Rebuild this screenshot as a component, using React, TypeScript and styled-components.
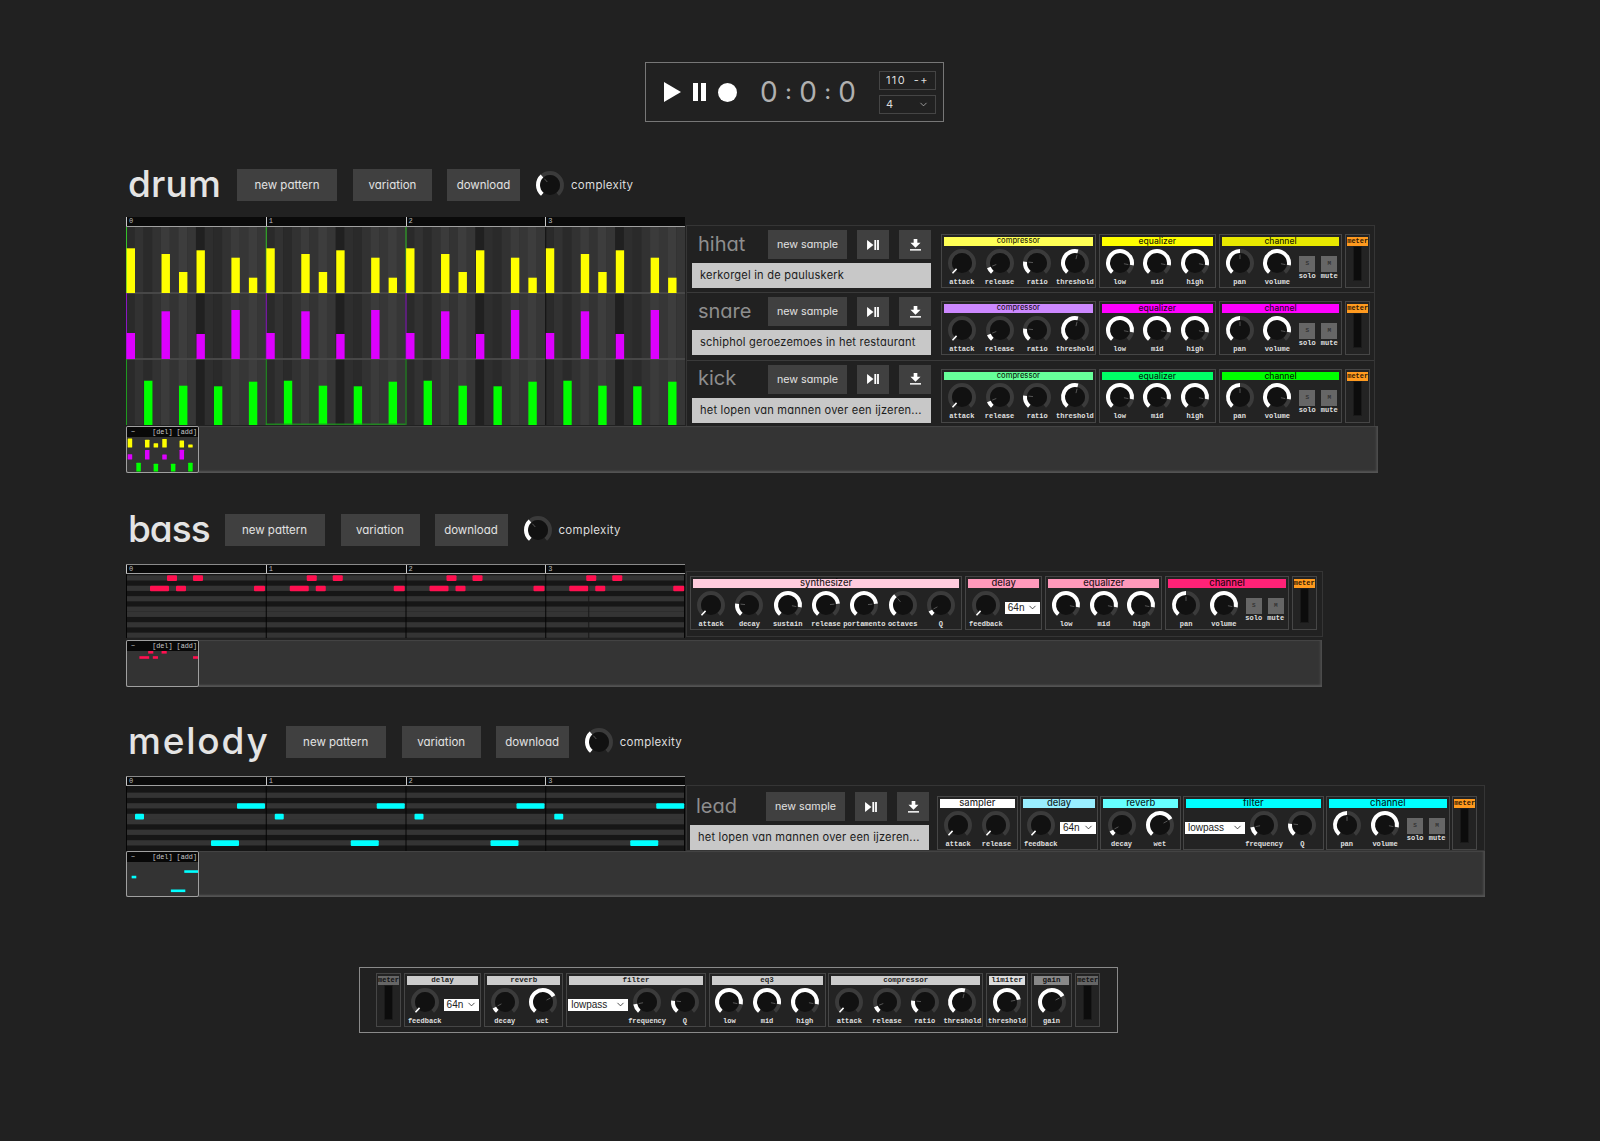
import React, { createContext, useContext } from "react";
import styled, { createGlobalStyle } from "styled-components";
import { ChevronDown } from "lucide-react";

const SANS = `"Inter", "Noto Sans", sans-serif`;
const MONO = `"Liberation Mono", "DejaVu Sans Mono", monospace`;

const HeadSize = createContext(8.5);
const KnobWidth = createContext(37.7);

const Global = createGlobalStyle`
  html, body { margin: 0; padding: 0; background: #212121; }
  * { box-sizing: border-box; }
  body { font-family: ${SANS}; font-feature-settings: "cv11" 1; color: #ddd; }
`;

const Page = styled.div`
  width: 1600px;
  height: 1141px;
  padding-top: 62px;
  overflow: hidden;
  background: #212121;
`;

/* transport */
const Transport = styled.div`
  margin-left: 645px;
  width: 299px;
  height: 60px;
  border: 1px solid #777;
  display: flex;
  align-items: center;
  padding-left: 18px;
`;
const TransportIcon = styled.svg<{ $ml?: number }>`
  display: block;
  flex: none;
  fill: #fff;
  margin-left: ${(p) => p.$ml ?? 0}px;
`;
const Clock = styled.div`
  display: flex;
  align-items: center;
  width: 96px;
  margin-left: 23px;
  justify-content: space-between;
  font-size: 28px;
  font-weight: 400;
  color: #b0b0b0;
  line-height: 1;
`;
const Colon = styled.span`
  font-size: 20px;
  font-weight: 600;
`;
const TempoColumn = styled.div`
  margin-left: auto;
  margin-right: 7px;
  display: flex;
  flex-direction: column;
  gap: 5px;
`;
const TempoBox = styled.div`
  width: 57px;
  height: 19px;
  border: 1px solid #454545;
  display: flex;
  align-items: center;
  justify-content: space-between;
  padding: 0 6px;
  font-size: 11px;
  letter-spacing: 1.4px;
  color: #ddd;
`;

/* section */
const Section = styled.section<{ $mt: number }>`
  margin-top: ${(p) => p.$mt}px;
  margin-left: 126px;
`;
const Header = styled.header<{ $mb: number }>`
  display: flex;
  align-items: center;
  height: 32px;
  margin-bottom: ${(p) => p.$mb}px;
  padding-left: 2px;
`;
const Title = styled.h2<{ $w: number; $ls: number }>`
  width: ${(p) => p.$w}px;
  flex: none;
  margin: -2px 0 0;
  font-size: 37px;
  font-weight: 500;
  letter-spacing: ${(p) => p.$ls}px;
  line-height: 40px;
  color: #e4e4e4;
`;
const Button = styled.button<{ $w: number; $mr?: number; $h?: number; $fs?: number }>`
  flex: none;
  width: ${(p) => p.$w}px;
  height: ${(p) => p.$h ?? 32}px;
  margin: 0 ${(p) => p.$mr ?? 0}px 0 0;
  padding: 0;
  border: none;
  background: #404040;
  color: #e2e2e2;
  font-family: ${SANS};
  font-feature-settings: "cv11" 1;
  font-size: ${(p) => p.$fs ?? 11.5}px;
  display: flex;
  align-items: center;
  justify-content: center;
`;
const ComplexityLabel = styled.span`
  margin-left: 6px;
  font-size: 11.5px;
  letter-spacing: 0.3px;
  color: #ddd;
`;

const Track = styled.div<{ $w: number }>`
  width: ${(p) => p.$w}px;
`;
const Main = styled.div<{ $h: number }>`
  display: flex;
  align-items: flex-start;
  height: ${(p) => p.$h}px;
`;
const SeqColumn = styled.div`
  flex: none;
  width: 560px;
`;
const Ruler = styled.div<{ $top?: boolean }>`
  display: flex;
  width: 559px;
  height: 10px;
  background: #0a0a0a;
  border-bottom: 1.5px solid #a0a0a0;
  border-top: ${(p) => (p.$top ? "1px solid #8a8a8a" : "none")};
`;
const RulerBar = styled.div`
  flex: 1;
  border-left: 1.5px solid #c8c8c8;
  padding-left: 2px;
  font: 7px/8px ${MONO};
  color: #bbb;
`;
const Drawing = styled.svg`
  display: block;
`;

const Strip = styled.div<{ $h?: number }>`
  position: relative;
  height: ${(p) => p.$h ?? 47}px;
  background: #343434;
  box-shadow: inset 0 -2px 2px #555, inset -2px 0 2px #4a4a4a, inset 0 1px 1px #444;
`;
const Thumb = styled.div`
  width: 73px;
  height: 100%;
  background: #333;
  border: 1px solid #a0a0a0;
  border-radius: 2px;
  overflow: hidden;
`;
const ThumbHead = styled.div`
  height: 10px;
  background: #080808;
  display: flex;
  justify-content: space-between;
  padding: 0 1px 0 4px;
  font: 6.8px/10px ${MONO};
  color: #c8c8c8;
`;

/* effects panel */
const Panel = styled.div<{ $top: number; $w: number; $h?: number }>`
  flex: none;
  position: relative;
  z-index: 0;
  margin-top: ${(p) => p.$top}px;
  width: ${(p) => p.$w}px;
  ${(p) => (p.$h ? `height: ${p.$h}px;` : "")}
  border: 1px solid #353535;
`;
const PanelRow = styled.div<{ $pad: number; $gap: number; $pt: number }>`
  display: flex;
  align-items: flex-start;
  height: 67.3px;
  padding: 0 0 0 ${(p) => p.$pad}px;
  gap: ${(p) => p.$gap}px;
  border-bottom: 1px solid #3a3a3a;
`;
const SingleRow = styled(PanelRow)`
  height: 100%;
  border-bottom: none;
  padding-top: ${(p) => p.$pt}px;
`;
const SampleBlock = styled.div<{ $pt?: number }>`
  flex: none;
  width: 239px;
  padding-top: ${(p) => p.$pt ?? 4}px;
`;
const SampleTop = styled.div`
  display: flex;
  align-items: center;
  height: 29px;
`;
const SampleName = styled.span`
  flex: 1;
  margin-top: -2px;
  padding-left: 6px;
  font-size: 20px;
  color: #8e8e8e;
  line-height: 1;
`;
const SampleInput = styled.div`
  margin-top: 4px;
  height: 25px;
  padding: 0 8px;
  background: #c8c8c8;
  color: #1c1c1c;
  font-size: 11.1px;
  letter-spacing: 0.2px;
  line-height: 25px;
  white-space: nowrap;
`;
const Rack = styled.div<{ $pt: number; $gap: number }>`
  display: flex;
  align-items: flex-start;
  gap: ${(p) => p.$gap}px;
  padding-top: ${(p) => p.$pt}px;
`;
const Group = styled.div`
  flex: none;
  height: 54px;
  padding: 2px 1px 0;
  border: 1px solid #464646;
  background: #232323;
`;
const GroupHead = styled.div<{ $c: string; $bold?: boolean; $size: number }>`
  height: 8.5px;
  margin: 0 1px;
  background: ${(p) => p.$c};
  color: rgba(0, 0, 0, 0.88);
  text-align: center;
  font: ${(p) => (p.$bold ? `bold 7.5px/8.5px ${MONO}` : `500 ${p.$size}px/8.5px ${SANS}`)};
  white-space: nowrap;
`;
const GroupBody = styled.div`
  display: flex;
  align-items: flex-start;
`;
const KnobItem = styled.div<{ $w: number }>`
  flex: none;
  width: ${(p) => p.$w}px;
  display: flex;
  flex-direction: column;
  align-items: center;
  padding-top: 2px;
`;
const Label = styled.span`
  font: bold 7px/8px ${MONO};
  color: #e0e0e0;
  white-space: nowrap;
`;
const ToggleItem = styled.div`
  flex: none;
  width: 22px;
  display: flex;
  flex-direction: column;
  align-items: center;
  padding-top: 10px;
`;
const ToggleBox = styled.div`
  width: 16px;
  height: 16px;
  background: #666;
  color: #333;
  font: bold 6px/16px ${MONO};
  text-align: center;
`;
const SelectBox = styled.div<{ $w: number }>`
  flex: none;
  width: ${(p) => p.$w}px;
  height: 12px;
  margin-top: 14px;
  padding: 0 2px 0 3px;
  background: #fff;
  color: #222;
  font: 10px/12px "Liberation Sans", Arial, sans-serif;
  display: flex;
  align-items: center;
  justify-content: space-between;
`;
const MeterGroup = styled(Group)`
  width: 25px;
  display: flex;
  flex-direction: column;
  align-items: center;
`;
const MeterHead = styled.div<{ $c: string }>`
  width: 100%;
  height: 9px;
  background: ${(p) => p.$c};
  color: rgba(0, 0, 0, 0.85);
  font: bold 7px/9px ${MONO};
  text-align: center;
  white-space: nowrap;
`;
const MeterBar = styled.div`
  width: 9px;
  height: 35px;
  background: #0c0c0c;
  border: 1px solid #1a1a1a;
`;

const Master = styled.div`
  margin: 70px 0 0 359px;
  width: 759px;
  height: 66px;
  border: 1px solid #8a8a8a;
  padding: 5px 0 0 16px;
  display: flex;
  align-items: flex-start;
  gap: 2.9px;
`;

/* helpers */
const pt = (a: number, r: number, c: number) => {
  const t = (a * Math.PI) / 180;
  return [c + r * Math.sin(t), c - r * Math.cos(t)];
};
const arc = (from: number, to: number, r: number, c: number) => {
  const [x1, y1] = pt(from, r, c);
  const [x2, y2] = pt(to, r, c);
  return `M${x1} ${y1}A${r} ${r} 0 ${to - from > 180 ? 1 : 0} 1 ${x2} ${y2}`;
};

function KnobDial({ v }: { v: number }) {
  const c = 15;
  const r = 12;
  const end = -140 + 280 * v;
  const [a, b] = pt(end, 4, c);
  const [d, e] = pt(end, v < 0.05 ? 14 : 8.5, c);
  return (
    <Drawing width={30} height={30} viewBox="0 0 30 30">
      <path d={arc(-140, 140, r, c)} fill="none" stroke="#3b3b3b" strokeWidth={4} />
      <circle cx={c} cy={c} r={10} fill="#111" />
      {v >= 0.05 && <path d={arc(-140, end, r, c)} fill="none" stroke="#fff" strokeWidth={4} />}
      <line
        x1={v < 0.05 ? pt(end, 8, c)[0] : a}
        y1={v < 0.05 ? pt(end, 8, c)[1] : b}
        x2={d}
        y2={e}
        stroke={v < 0.05 ? "#fff" : "#555"}
        strokeWidth={v < 0.05 ? 1.5 : 1}
      />
    </Drawing>
  );
}

function Knob({ label, v, w }: { label: string; v: number; w?: number }) {
  const ctx = useContext(KnobWidth);
  return (
    <KnobItem $w={w ?? ctx}>
      <KnobDial v={v} />
      <Label>{label}</Label>
    </KnobItem>
  );
}

function FxGroup({ title, c, bold, size, children }: { title: string; c: string; bold?: boolean; size?: number; children: React.ReactNode }) {
  const ctx = useContext(HeadSize);
  return (
    <Group>
      <GroupHead $c={c} $bold={bold} $size={size ?? ctx}>{title}</GroupHead>
      <GroupBody>{children}</GroupBody>
    </Group>
  );
}

function Select({ w, value }: { w: number; value: string }) {
  return (
    <SelectBox $w={w}>
      {value}
      <ChevronDown size={11} strokeWidth={1.6} color="#111" />
    </SelectBox>
  );
}

function Toggle({ glyph, label }: { glyph: string; label: string }) {
  return (
    <ToggleItem>
      <ToggleBox>{glyph}</ToggleBox>
      <Label>{label}</Label>
    </ToggleItem>
  );
}

function Meter({ c = "#ff9a1f" }: { c?: string }) {
  return (
    <MeterGroup>
      <MeterHead $c={c}>meter</MeterHead>
      <MeterBar />
    </MeterGroup>
  );
}

function Compressor({ c, bold }: { c: string; bold?: boolean }) {
  return (
    <FxGroup title="compressor" c={c} bold={bold} size={7.6}>
      <Knob label="attack" v={0.01} />
      <Knob label="release" v={0.1} />
      <Knob label="ratio" v={0.2} />
      <Knob label="threshold" v={0.55} />
    </FxGroup>
  );
}
function Equalizer({ c, title = "equalizer", bold }: { c: string; title?: string; bold?: boolean }) {
  return (
    <FxGroup title={title} c={c} bold={bold}>
      <Knob label="low" v={0.86} />
      <Knob label="mid" v={0.86} />
      <Knob label="high" v={0.86} />
    </FxGroup>
  );
}
function Channel({ c }: { c: string }) {
  return (
    <FxGroup title="channel" c={c}>
      <Knob label="pan" v={0.5} />
      <Knob label="volume" v={0.86} />
      <Toggle glyph="S" label="solo" />
      <Toggle glyph="M" label="mute" />
    </FxGroup>
  );
}
function Delay({ c, bold, sw = 35.5 }: { c: string; bold?: boolean; sw?: number }) {
  return (
    <FxGroup title="delay" c={c} bold={bold}>
      <Knob label="feedback" v={0.01} />
      <Select w={sw} value="64n" />
    </FxGroup>
  );
}
function Reverb({ c, bold }: { c: string; bold?: boolean }) {
  return (
    <FxGroup title="reverb" c={c} bold={bold}>
      <Knob label="decay" v={0.08} />
      <Knob label="wet" v={0.72} />
    </FxGroup>
  );
}
function Filter({ c, bold }: { c: string; bold?: boolean }) {
  return (
    <FxGroup title="filter" c={c} bold={bold}>
      <Select w={60} value="lowpass" />
      <Knob label="frequency" v={0.14} />
      <Knob label="Q" v={0.2} />
    </FxGroup>
  );
}

const PlayPause = () => (
  <TransportIcon width={12} height={10} viewBox="0 0 13 11">
    <path d="M0 0 7 5.5 0 11z" />
    <rect x="8" width="2" height="11" />
    <rect x="11" width="2" height="11" />
  </TransportIcon>
);
const DownloadIcon = () => (
  <TransportIcon width={11} height={12} viewBox="0 0 12 13">
    <path d="M4 0h4v4h3.5L6 9.5.5 4H4z" />
    <rect y="11" width="12" height="1.6" />
  </TransportIcon>
);

function Sample({ name, text, pt: top }: { name: string; text: string; pt?: number }) {
  return (
    <SampleBlock $pt={top}>
      <SampleTop>
        <SampleName>{name}</SampleName>
        <Button $w={79} $h={29} $mr={10} $fs={10.7}>new sample</Button>
        <Button $w={32} $h={29} $mr={10}><PlayPause /></Button>
        <Button $w={32} $h={29}><DownloadIcon /></Button>
      </SampleTop>
      <SampleInput>{text}</SampleInput>
    </SampleBlock>
  );
}

function SectionHeader({ title, w, mb, ls }: { title: string; w: number; mb: number; ls: number }) {
  return (
    <Header $mb={mb}>
      <Title $w={w} $ls={ls}>{title}</Title>
      <Button $w={100} $mr={16}>new pattern</Button>
      <Button $w={79} $mr={15}>variation</Button>
      <Button $w={73} $mr={15}>download</Button>
      <KnobDial v={0.35} />
      <ComplexityLabel>complexity</ComplexityLabel>
    </Header>
  );
}

const Bars = ({ top }: { top?: boolean }) => (
  <Ruler $top={top}>
    {[0, 1, 2, 3].map((n) => (
      <RulerBar key={n}>{n}</RulerBar>
    ))}
  </Ruler>
);

/* drum grid */
const STEP = 139.75 / 16;
const SHADES = [
  "#2a2a2a", "#323232", "#2a2a2a", "#323232",
  "#3b3b3b", "#333333", "#3d3d3d", "#363636",
  "#202020", "#2e2e2e", "#2a2a2a", "#323232",
  "#3b3b3b", "#363636", "#3d3d3d", "#363636",
];
type Hit = [number, number];
const DRUMS: { color: string; line: string; hits: Hit[] }[] = [
  { color: "#ffff00", line: "#35c22a", hits: [[0, 44.7], [4, 39], [6, 21], [8, 42.7], [12, 35.3], [14, 15.3]] },
  { color: "#dd00ff", line: "#8a16c4", hits: [[0, 26], [4, 47.7], [8, 25], [12, 49]] },
  { color: "#00ff00", line: "#1f9a1f", hits: [[2, 44.3], [6, 39.3], [10, 38.7], [14, 43.3]] },
];

function DrumGrid() {
  const rh = 66;
  return (
    <Drawing width={559} height={198}>
      {[0, 1, 2, 3].map((b) =>
        SHADES.map((s, i) => (
          <rect key={`${b}${i}`} x={b * 139.75 + i * STEP} y={0} width={STEP + 0.3} height={198} fill={s} />
        ))
      )}
      {[1, 2].map((r) => (
        <rect key={r} x={0} y={r * rh - 1} width={559} height={2} fill="#474747" />
      ))}
      {DRUMS.map((d, r) => (
        <g key={r}>
          {[0, 1, 2, 3].map((b) => (
            <rect key={b} x={b * 139.75} y={r * rh} width={1} height={rh} fill={b === 3 ? "#111" : d.line} />
          ))}
          {[0, 1, 2, 3].map((b) =>
            d.hits.map(([s, h]) => (
              <rect key={`${b}-${s}`} x={b * 139.75 + s * STEP + 0.6} y={(r + 1) * rh - h} width={8.4} height={h} fill={d.color} />
            ))
          )}
        </g>
      ))}
      <rect x={139.75} y={196.6} width={139.75} height={1.2} fill="#1f9a1f" />
    </Drawing>
  );
}

function DrumThumb() {
  return (
    <Drawing width={71} height={35}>
      {DRUMS.map((d, r) =>
        d.hits.map(([s, h]) => (
          <rect key={`${r}-${s}`} x={s * 4.32 + 0.7} y={(r + 1) * 12 - 1.5 - h * 0.2} width={4.5} height={h * 0.2} fill={d.color} rx={0.5} />
        ))
      )}
    </Drawing>
  );
}

/* piano roll */
type Note = { x: number; w: number; row: number };
const ROW_A = [1, 0, 1, 0, 1, 0, 1, 1, 0, 1, 0, 1];
const ROW_B = [0, 1, 0, 1, 0, 1, 1, 0, 1, 0, 1, 0];
const BASS: Note[] = [
  { x: 41, w: 10, row: 0 },
  { x: 67, w: 10, row: 0 },
  { x: 24, w: 19, row: 2 },
  { x: 50, w: 10, row: 2 },
  { x: 128, w: 11, row: 2 },
];
const LEAD: Note[] = [
  { x: 9, w: 9, row: 5 },
  { x: 111, w: 28, row: 3 },
  { x: 85, w: 28, row: 10 },
];

function PianoGrid({ notes, color, rows, h, extra }: { notes: Note[]; color: string; rows: number[]; h: number; extra?: boolean }) {
  const rh = (h - 1.5) / 12;
  return (
    <Drawing width={559} height={h}>
      <rect width={559} height={h} fill="#161616" />
      {rows.map((on, i) =>
        on ? <rect key={i} x={0} y={1.3 + i * rh} width={559} height={rh} fill="#343434" /> : null
      )}
      {[0, 1, 2, 3, 4].map((b) => (
        <rect key={b} x={Math.min(b * 139.75, 558)} y={0} width={1} height={h} fill="#050505" />
      ))}
      {extra && <rect x={3 * 139.75 + 43} y={0} width={1} height={h} fill="#181818" />}
      {[0, 1, 2, 3].map((b) =>
        notes.map((n, i) => (
          <rect key={`${b}-${i}`} x={b * 139.75 + n.x} y={1.3 + n.row * rh} width={n.w} height={rh + 0.4} rx={1} fill={color} />
        ))
      )}
    </Drawing>
  );
}

function PianoThumb({ notes, color, rh }: { notes: Note[]; color: string; rh: number }) {
  return (
    <Drawing width={71} height={35}>
      {notes.map((n, i) => (
        <rect key={i} x={n.x * 0.516} y={n.row * rh} width={n.w * 0.516} height={2.6} fill={color} />
      ))}
    </Drawing>
  );
}

function PatternStrip({ h, children }: { h?: number; children: React.ReactNode }) {
  return (
    <Strip $h={h}>
      <Thumb>
        <ThumbHead>
          <span>~</span>
          <span>[del] [add]</span>
        </ThumbHead>
        {children}
      </Thumb>
    </Strip>
  );
}

export default function App() {
  return (
    <Page>
      <Global />
      <Transport>
        <TransportIcon width={17} height={20} viewBox="0 0 17 20">
          <path d="M0 0 17 10 0 20z" />
        </TransportIcon>
        <TransportIcon width={13} height={18} viewBox="0 0 13 18" $ml={12}>
          <rect width="5" height="18" />
          <rect x="8" width="5" height="18" />
        </TransportIcon>
        <TransportIcon width={19} height={19} viewBox="0 0 19 19" $ml={12}>
          <circle cx="9.5" cy="9.5" r="9.5" />
        </TransportIcon>
        <Clock>
          <span>0</span>
          <Colon>:</Colon>
          <span>0</span>
          <Colon>:</Colon>
          <span>0</span>
        </Clock>
        <TempoColumn>
          <TempoBox>
            <span>110</span>
            <span>-+</span>
          </TempoBox>
          <TempoBox>
            <span>4</span>
            <ChevronDown size={11} strokeWidth={1.5} color="#ccc" />
          </TempoBox>
        </TempoColumn>
      </Transport>

      <Section $mt={47}>
        <SectionHeader title="drum" w={109} mb={16} ls={0.2} />
        <Track $w={1252}>
          <Main $h={209}>
            <SeqColumn>
              <Bars />
              <DrumGrid />
            </SeqColumn>
            <Panel $top={8} $w={689}>
              {[
                { n: "hihat", t: "kerkorgel in de pauluskerk", a: "#ffff55", b: "#ffff00", c: "#e8e800" },
                { n: "snare", t: "schiphol geroezemoes in het restaurant", a: "#cc88ff", b: "#ff00ff", c: "#ff00ff" },
                { n: "kick", t: "het lopen van mannen over een ijzeren...", a: "#66ff99", b: "#00ff66", c: "#00ff00" },
              ].map((r) => (
                <PanelRow key={r.n} $pad={5} $gap={10} $pt={0}>
                  <Sample name={r.n} text={r.t} />
                  <Rack $pt={8} $gap={3}>
                    <Compressor c={r.a} />
                    <Equalizer c={r.b} />
                    <Channel c={r.c} />
                    <Meter />
                  </Rack>
                </PanelRow>
              ))}
            </Panel>
          </Main>
          <PatternStrip>
            <DrumThumb />
          </PatternStrip>
        </Track>
      </Section>

      <Section $mt={41}>
        <SectionHeader title="bass" w={96.5} mb={18} ls={-1} />
        <Track $w={1196}>
          <Main $h={76}>
            <SeqColumn>
              <Bars top />
              <PianoGrid notes={BASS} color="#ff1050" rows={ROW_A} h={64} extra />
            </SeqColumn>
            <Panel $top={7} $w={637} $h={66}>
              <SingleRow $pad={3} $gap={0} $pt={4}>
                <HeadSize.Provider value={9.4}>
                  <Rack $pt={0} $gap={3}>
                    <FxGroup title="synthesizer" c="#ffccdd">
                      <Knob label="attack" v={0.01} w={38.3} />
                      <Knob label="decay" v={0.2} w={38.3} />
                      <Knob label="sustain" v={0.86} w={38.3} />
                      <Knob label="release" v={0.8} w={38.3} />
                      <Knob label="portamento" v={0.8} w={38.3} />
                      <Knob label="octaves" v={0.36} w={38.3} />
                      <Knob label="Q" v={0.08} w={38.3} />
                    </FxGroup>
                    <Delay c="#ff99bb" />
                    <Equalizer c="#ff99bb" />
                    <Channel c="#ff2277" />
                    <Meter />
                  </Rack>
                </HeadSize.Provider>
              </SingleRow>
            </Panel>
          </Main>
          <PatternStrip>
            <PianoThumb notes={BASS} color="#ff1050" rh={2.6} />
          </PatternStrip>
        </Track>
      </Section>

      <Section $mt={39}>
        <SectionHeader title="melody" w={157.7} mb={18} ls={1.8} />
        <Track $w={1359}>
          <Main $h={75}>
            <SeqColumn>
              <Bars top />
              <PianoGrid notes={LEAD} color="#00ffff" rows={ROW_B} h={65} />
            </SeqColumn>
            <Panel $top={9} $w={799} $h={66}>
              <SingleRow $pad={3} $gap={8} $pt={0}>
                <Sample name="lead" text="het lopen van mannen over een ijzeren..." pt={6} />
                <HeadSize.Provider value={9.4}>
                  <KnobWidth.Provider value={38.3}>
                    <Rack $pt={10} $gap={2}>
                      <FxGroup title="sampler" c="#ffffff">
                        <Knob label="attack" v={0.01} />
                        <Knob label="release" v={0.01} />
                      </FxGroup>
                      <Delay c="#99eeff" sw={36.5} />
                      <Reverb c="#66ffff" />
                      <Filter c="#00ffff" />
                      <Channel c="#00ffff" />
                      <Meter />
                    </Rack>
                  </KnobWidth.Provider>
                </HeadSize.Provider>
              </SingleRow>
            </Panel>
          </Main>
          <PatternStrip h={46}>
            <PianoThumb notes={LEAD} color="#00ffff" rh={2.75} />
          </PatternStrip>
        </Track>
      </Section>

      <Master>
        <Meter c="#666" />
        <Delay c="#cccccc" bold />
        <Reverb c="#cccccc" bold />
        <Filter c="#cccccc" bold />
        <Equalizer c="#cccccc" title="eq3" bold />
        <Compressor c="#cccccc" bold />
        <FxGroup title="limiter" c="#dddddd" bold>
          <Knob label="threshold" v={0.78} />
        </FxGroup>
        <FxGroup title="gain" c="#888888" bold>
          <Knob label="gain" v={0.72} />
        </FxGroup>
        <Meter c="#666" />
      </Master>
    </Page>
  );
}
